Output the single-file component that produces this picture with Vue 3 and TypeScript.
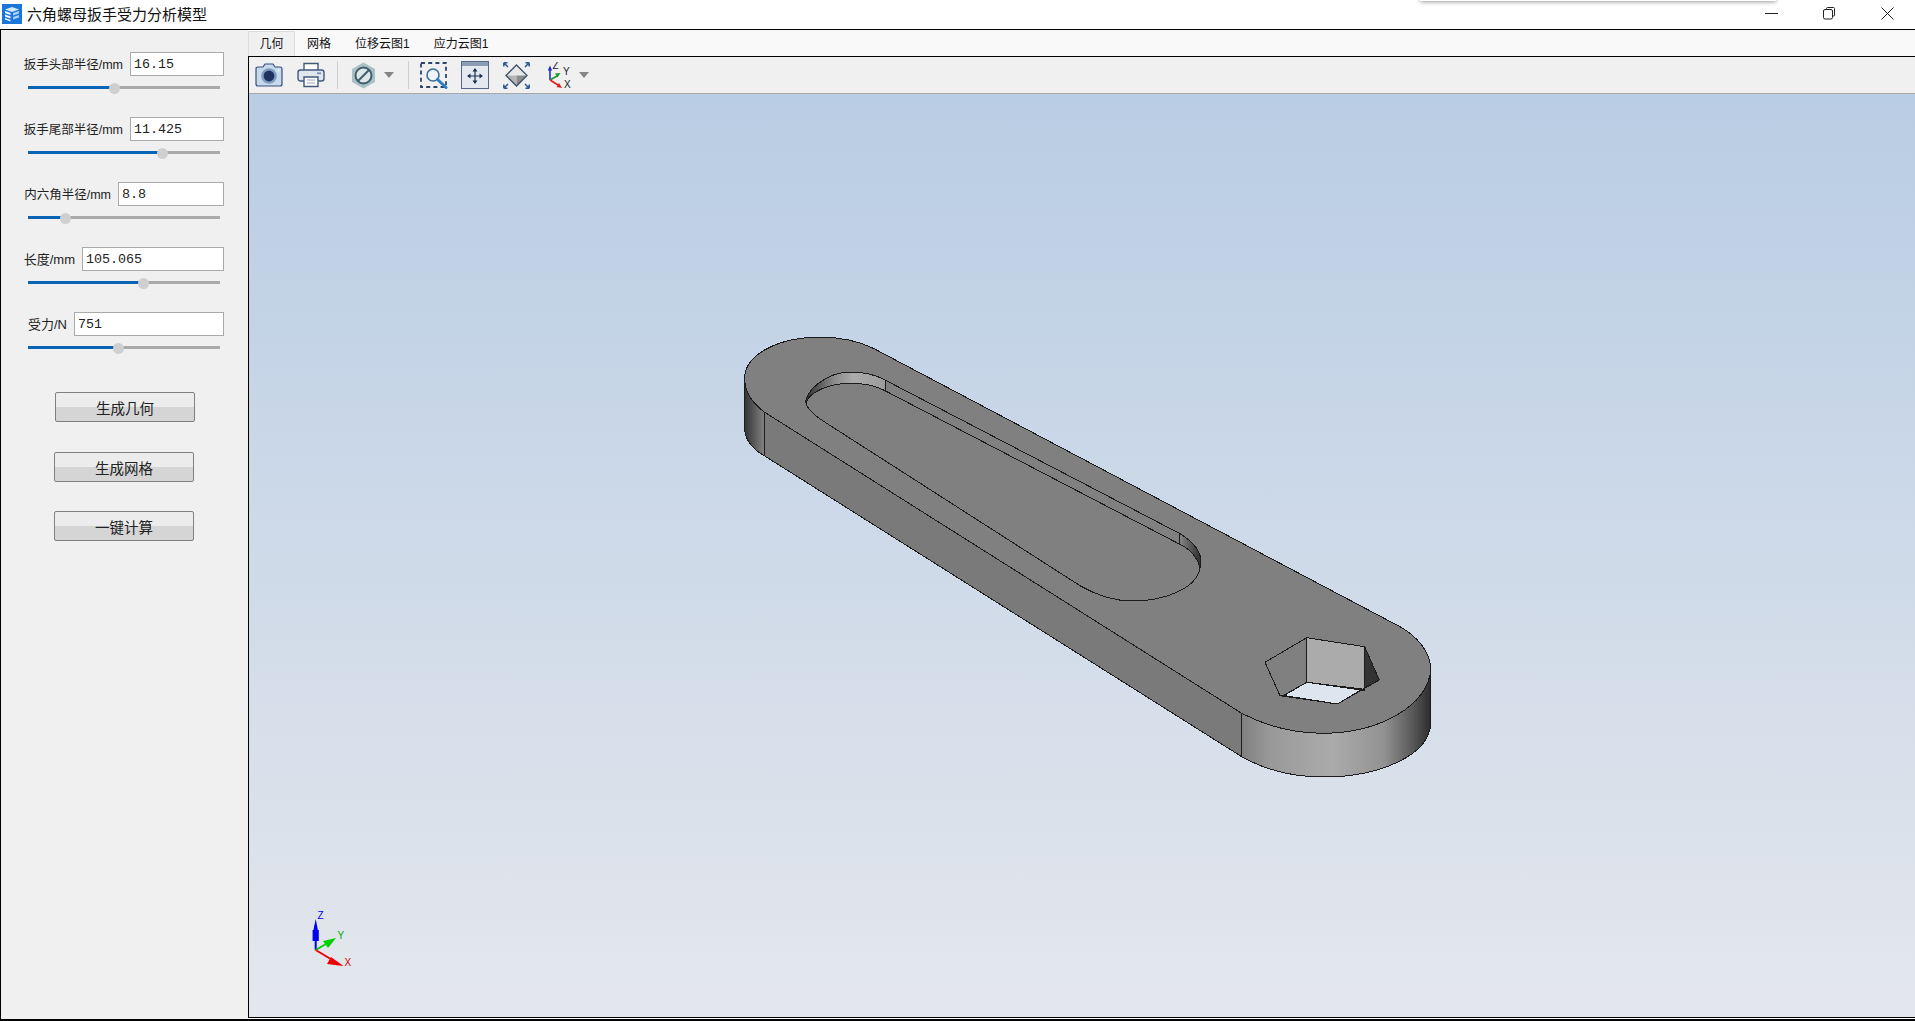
<template>
  <div class="window">
    <header class="titlebar">
      <svg class="app-icon" width="20" height="20" viewBox="0 0 20 20">
        <rect width="20" height="20" fill="#1a76dc" />
        <path d="M3 5.5 L10 3 L17 5.5 L10 8 Z" fill="#d5e8fb" />
        <path d="M3 7 L8.5 9 V11 L3 9 Z M3 10.5 L8.5 12.5 V14.5 L3 12.5 Z M3 14 L8.5 16 V17.5 L3 15.5 Z" fill="#fff" />
        <path d="M11 9 L17 7 V9.5 L11 11.5 Z M11 13 L17 11 V13.5 L11 15.5 Z" fill="#a9d0f5" />
      </svg>
      <span class="app-title">六角螺母扳手受力分析模型</span>
      <div class="win-buttons">
        <svg width="13" height="13" viewBox="0 0 13 13"><path d="M0 6.5 H13" stroke="#222" fill="none" /></svg>
        <svg width="13" height="13" viewBox="0 0 13 13">
          <path d="M3.5 2.5 V1.5 Q3.5 .5 4.5 .5 H10.5 Q11.5 .5 11.5 1.5 V8 Q11.5 9 10.5 9 H9.5" stroke="#222" fill="none" />
          <rect x=".5" y="2.5" width="9" height="9.5" rx="1.5" stroke="#222" fill="none" />
        </svg>
        <svg width="13" height="13" viewBox="0 0 13 13"><path d="M.5 .5 L12.5 12.5 M12.5 .5 L.5 12.5" stroke="#222" fill="none" /></svg>
      </div>
      <div class="other-window"></div>
    </header>

    <div class="body">
      <aside class="sidebar">
        <div v-for="f in fields" :key="f.label" class="field">
          <div class="field-row">
            <label :class="{ short: f.short }">{{ f.label }}</label>
            <input class="num" :value="f.value" :style="{ width: f.inputWidth + 'px' }" />
          </div>
          <div class="slider">
            <div class="slider-fill" :style="{ width: f.pos + 'px' }"></div>
            <div class="slider-thumb" :style="{ left: f.pos + 'px' }"></div>
          </div>
        </div>
        <button class="action first" type="button">生成几何</button>
        <button class="action second" type="button">生成网格</button>
        <button class="action third" type="button">一键计算</button>
      </aside>

      <main class="workspace">
        <nav class="tabs">
          <div v-for="(t, i) in tabs" :key="t" class="tab" :class="{ active: i === 0 }">{{ t }}</div>
        </nav>
        <div class="pane">
          <div class="toolbar">
            <!-- camera -->
            <svg class="tool camera" width="28" height="24" viewBox="0 0 28 24">
              <path d="M1 6 Q1 4 3 4 H8 L10 1 H18 L20 4 H25 Q27 4 27 6 V21 Q27 23 25 23 H3 Q1 23 1 21 Z" fill="#c9d9ec" stroke="#34507c" stroke-width="1.2" />
              <circle cx="14" cy="13" r="7.8" fill="#7f9cc0" />
              <circle cx="14" cy="13" r="5.4" fill="#1e3360" />
              <circle cx="23.5" cy="7.5" r="1" fill="#fff" />
            </svg>
            <!-- printer -->
            <svg class="tool printer" width="28" height="26" viewBox="0 0 28 26">
              <path d="M7 9 V1.5 H21 V9" fill="#fff" stroke="#44587c" stroke-width="1.4" />
              <rect x="1" y="8" width="26" height="11" rx="2.5" fill="#dfe6ee" stroke="#44587c" stroke-width="1.4" />
              <rect x="20" y="10.5" width="4" height="1.6" fill="#6e83a3" />
              <path d="M7 15 H21 V24.5 H7 Z" fill="#fff" stroke="#44587c" stroke-width="1.4" />
              <path d="M10 18 H18 M10 21 H18" stroke="#9aa8bd" stroke-width="1.2" />
            </svg>
            <span class="sep first-sep"></span>
            <!-- section view -->
            <svg class="tool hex" width="25" height="27" viewBox="0 0 25 27">
              <path d="M12.5 .5 L24 7 V20 L12.5 26.5 L1 20 V7 Z" fill="#a9c0c4" />
              <circle cx="12.5" cy="13.5" r="8" fill="#dfe6e8" stroke="#3e5e6e" stroke-width="2" />
              <path d="M7 19 L18 8" stroke="#3e5e6e" stroke-width="2" />
            </svg>
            <span class="caret hex-caret"></span>
            <span class="sep second-sep"></span>
            <!-- zoom window -->
            <svg class="tool zoomwin" width="29" height="27" viewBox="0 0 29 27">
              <rect x="1" y="1" width="25" height="24" fill="none" stroke="#2c4470" stroke-width="1.8" stroke-dasharray="4 3.2" />
              <circle cx="13" cy="13" r="6" fill="#eef4fa" stroke="#3c6ca0" stroke-width="1.6" />
              <path d="M17.5 17.5 L26 25.5" stroke="#2d7cc0" stroke-width="3" stroke-linecap="round" />
            </svg>
            <!-- pan -->
            <svg class="tool pan" width="28" height="28" viewBox="0 0 28 28">
              <rect x=".5" y=".5" width="27" height="27" fill="#e4e9f0" stroke="#55678a" />
              <rect x="1" y="1" width="26" height="4" fill="#8e9db6" />
              <path d="M14 8 V22 M7 15 H21" stroke="#1c3050" stroke-width="1.2" />
              <path d="M14 7 L11.5 10.5 H16.5 Z M14 23 L11.5 19.5 H16.5 Z M6 15 L9.5 12.5 V17.5 Z M22 15 L18.5 12.5 V17.5 Z" fill="#1c3050" />
            </svg>
            <!-- fit all -->
            <svg class="tool fit" width="27" height="27" viewBox="0 0 27 27">
              <path d="M13.5 3 L24 13.5 H3 Z" fill="#e8e8e8" />
              <path d="M3 13.5 H13.5 V24 Z" fill="#b4b4b4" />
              <path d="M24 13.5 H13.5 V24 Z" fill="#8c8c8c" />
              <path d="M13.5 3 L24 13.5 L13.5 24 L3 13.5 Z" fill="none" stroke="#3d5166" stroke-width="1.3" />
              <path d="M.8 .8 L5 5 M.8 .8 V4.5 M.8 .8 H4.5 M26.2 .8 L22 5 M26.2 .8 V4.5 M26.2 .8 H22.5 M.8 26.2 L5 22 M.8 26.2 V22.5 M.8 26.2 H4.5 M26.2 26.2 L22 22 M26.2 26.2 V22.5 M26.2 26.2 H22.5" stroke="#2d5a90" stroke-width="1.5" fill="none" />
            </svg>
            <!-- axes -->
            <svg class="tool axes" width="25" height="27" viewBox="0 0 25 27">
              <path d="M3 18 V7" stroke="#1f2fd0" stroke-width="1.6" />
              <path d="M3 3.5 L.8 8.5 H5.2 Z" fill="#1f2fd0" />
              <path d="M3 18 L10 14" stroke="#189a30" stroke-width="1.6" />
              <path d="M13.5 11 L8 11.5 L10.5 15.5 Z" fill="#189a30" />
              <path d="M3 18 L11 23" stroke="#e01c1c" stroke-width="1.6" />
              <path d="M15 26 L9.5 25 L12 21 Z" fill="#e01c1c" />
              <text x="5.5" y="7" class="axis-glyph">Z</text>
              <text x="16" y="13" class="axis-glyph">Y</text>
              <text x="17" y="26" class="axis-glyph">X</text>
            </svg>
            <span class="caret axes-caret"></span>
          </div>

          <div class="viewport">
            <svg class="scene" viewBox="249 94 1666 923" preserveAspectRatio="none">
              <defs>
                <linearGradient id="capL" gradientUnits="userSpaceOnUse" x1="744" y1="0" x2="766" y2="0">
                  <stop offset="0" stop-color="#303030" />
                  <stop offset="1" stop-color="#8a8a8a" />
                </linearGradient>
                <linearGradient id="capR" gradientUnits="userSpaceOnUse" x1="1242" y1="0" x2="1431" y2="0">
                  <stop offset="0" stop-color="#808080" />
                  <stop offset=".15" stop-color="#999" />
                  <stop offset=".48" stop-color="#ababab" />
                  <stop offset=".75" stop-color="#929292" />
                  <stop offset=".9" stop-color="#5a5a5a" />
                  <stop offset="1" stop-color="#2c2c2c" />
                </linearGradient>
                <linearGradient id="wallL" gradientUnits="userSpaceOnUse" x1="806" y1="0" x2="885" y2="0">
                  <stop offset="0" stop-color="#303030" />
                  <stop offset=".35" stop-color="#8a8a8a" />
                  <stop offset=".6" stop-color="#ababab" />
                  <stop offset="1" stop-color="#9c9c9c" />
                </linearGradient>
                <linearGradient id="wallR" gradientUnits="userSpaceOnUse" x1="1179" y1="0" x2="1201" y2="0">
                  <stop offset="0" stop-color="#8a8a8a" />
                  <stop offset="1" stop-color="#2c2c2c" />
                </linearGradient>
              </defs>

              <g shape-rendering="crispEdges" stroke="#1c1c1c" stroke-width="1" stroke-linejoin="round">
                <!-- side faces -->
                <path d="M744.7 378 V430 C746 442 754 450 764.7 456 V412.3 C752 403 744.7 391 744.7 378 Z" fill="url(#capL)" />
                <path d="M764.7 412.3 L1241.7 713.3 V756.7 L764.7 456 Z" fill="#7a7a7a" />
                <path d="M1241.7 713.3 C1262 724 1290 733 1323 733.3 C1380 733 1430 705 1430.7 668 V723 C1430 755 1380 777 1323 777 C1290 777 1262 768 1241.7 756.7 Z" fill="url(#capR)" />

                <!-- top face -->
                <path d="M764.7 412.3 C752 403 744.7 391 744.7 378 C744.7 355 778 337 820 337.3 C840 337 858 341 873.3 348.3 L1400 626.7 C1418 637 1430 652 1430.7 668 C1430 705 1380 733 1323 733.3 C1290 733 1262 724 1241.7 713.3 Z" fill="#808080" />

                <!-- pocket -->
                <path d="M806 403.3 C804 392 826 372 850 372.3 C864 372 876 375 885 380 L1179.3 533.3 C1192 541 1201 551 1201 561.7 L1200 568 C1197 588 1165 601 1133 601 C1115 601 1096 595 1080 585.7 L826.7 423.3 C815 416 808 410 806 403.3 Z" fill="#808080" />
                <path d="M806 403.3 C804 392 826 372 850 372.3 C864 372 876 375 885 380 V390.7 C875 385 862 383.3 850 383.3 C828 383.3 808 393 806 403.3 Z" fill="url(#wallL)" />
                <path d="M885 380 L1179.3 533.3 V544 L885 390.7" fill="none" />
                <path d="M1179.3 533.3 C1192 541 1201 551 1201 561.7 L1200 568 C1197 556 1190 549 1179.3 544 Z" fill="url(#wallR)" />

                <!-- hexagon -->
                <path d="M1265 662.3 L1306.7 637.7 V682.3 L1283 695.7 H1280 Z" fill="#808080" />
                <path d="M1306.7 637.7 L1364.7 646.7 V689.3 L1306.7 682.3 Z" fill="#ababab" />
                <path d="M1364.7 646.7 L1379.3 680 L1361 690 H1364.7 Z" fill="#333" />
                <path d="M1284 695.5 L1306.7 682.3 L1361 690 L1337.3 704 Z" fill="#dde5ef" />
                <path d="M1265 662.3 L1306.7 637.7 L1364.7 646.7 L1379.3 680 L1337.3 704 L1280 695.7 Z" fill="none" />
              </g>

              <!-- triad -->
              <path d="M315.7 950 V925" stroke="#0000f0" stroke-width="2" />
              <path d="M315.7 919 L313.5 930 H312.6 V941 H318.8 V930 H317.9 Z" fill="#0000f0" />
              <path d="M315.7 950 L331 941" stroke="#00d000" stroke-width="2" />
              <path d="M336 938 L323 941 L328 948 Z" fill="#00d000" />
              <path d="M315.7 950 L334 961" stroke="#f00000" stroke-width="2" />
              <path d="M343.5 966 L331 957 L327 964 Z" fill="#f00000" />
              <text x="317.5" y="919" class="triad" fill="#0000f0">Z</text>
              <text x="337.5" y="939" class="triad" fill="#00b000">Y</text>
              <text x="344.5" y="966" class="triad" fill="#d00000">X</text>
            </svg>
          </div>
        </div>
      </main>
    </div>
  </div>
</template>

<script setup lang="ts">
interface Field {
  label: string;
  value: string;
  inputWidth: number;
  pos: number; // thumb centre, px from the rail start
  short?: boolean;
}

const fields: Field[] = [
  { label: '扳手头部半径/mm', value: '16.15', inputWidth: 94, pos: 86 },
  { label: '扳手尾部半径/mm', value: '11.425', inputWidth: 94, pos: 134 },
  { label: '内六角半径/mm', value: '8.8', inputWidth: 106, pos: 37 },
  { label: '长度/mm', value: '105.065', inputWidth: 142, pos: 115, short: true },
  { label: '受力/N', value: '751', inputWidth: 150, pos: 90, short: true },
];

const tabs = ['几何', '网格', '位移云图1', '应力云图1'];
</script>

<style scoped>
.window {
  width: 1915px;
  height: 1021px;
  display: flex;
  flex-direction: column;
  background: #fff;
  font-family: "Liberation Sans", "Noto Sans CJK SC", sans-serif;
  overflow: hidden;
}

.titlebar {
  position: relative;
  height: 29px;
  flex: none;
  display: flex;
  align-items: flex-start;
  background: #fff;
  border-bottom: 1px solid #000;
  box-sizing: content-box;
}
.app-icon {
  margin: 4px 0 0 2px;
}
.app-title {
  margin-left: 5px;
  margin-top: 3px;
  font-family: "Noto Sans CJK SC", sans-serif;
  font-size: 15px;
  line-height: 22px;
  color: #111;
}
.win-buttons {
  margin-left: auto;
  margin-top: 7px;
  margin-right: 21px;
  display: flex;
  gap: 45px;
}
.other-window {
  position: absolute;
  left: 1420px;
  top: -4px;
  width: 356px;
  height: 5px;
  background: #fff;
  box-shadow: 0 1px 4px rgba(0, 0, 0, 0.4);
}

.body {
  flex: 1;
  display: flex;
  min-height: 0;
  border-left: 1px solid #000;
  border-bottom: 2px solid #000;
}

.sidebar {
  width: 247px;
  flex: none;
  box-sizing: border-box;
  padding: 22px 24px 0 0;
  background: #f0f0f0;
  display: flex;
  flex-direction: column;
  align-items: flex-end;
}
.field {
  height: 65px;
  width: 200px;
}
.field-row {
  display: flex;
  justify-content: flex-end;
  align-items: center;
  gap: 7px;
  height: 24px;
}
.field-row label {
  padding-bottom: 2px;
  font-size: 12.5px;
  color: #222;
  white-space: nowrap;
}
.field-row label.short {
  font-size: 13px;
}
.num {
  box-sizing: border-box;
  height: 24px;
  padding: 0 0 0 3px;
  border: 1px solid #aaa;
  background: #fff;
  border-radius: 0;
  outline: none;
  font-family: "Liberation Mono", monospace;
  font-size: 13.33px;
  color: #222;
}
.slider {
  position: relative;
  margin: 10px 4px 0 4px;
  height: 3px;
  width: 192px;
  background: #aaa;
}
.slider-fill {
  height: 3px;
  background: #0a64b4;
}
.slider-thumb {
  position: absolute;
  top: -3px;
  width: 11px;
  height: 11px;
  margin-left: -5.5px;
  border-radius: 50%;
  background: #cfcfcf;
}

.action {
  align-self: flex-start;
  box-sizing: border-box;
  width: 140px;
  height: 30px;
  padding: 0;
  border: 1px solid #808080;
  border-radius: 2px;
  background: linear-gradient(#ececec 0, #ececec 50%, #d5d5d5 50%, #d5d5d5 100%);
  font-family: "Noto Sans CJK SC", sans-serif;
  font-size: 14.5px;
  color: #222;
}
.action.first {
  margin: 15px 0 0 54px;
}
.action.second {
  margin: 30px 0 0 53px;
}
.action.third {
  margin: 29px 0 0 53px;
}

.workspace {
  flex: 1;
  min-width: 0;
  display: flex;
  flex-direction: column;
  background: #fff;
  padding-bottom: 1px;
}

.tabs {
  height: 26px;
  flex: none;
  display: flex;
  align-items: flex-end;
  background: #f9f9f9;
  border-bottom: 1px solid #000;
}
.tab {
  box-sizing: border-box;
  height: 25px;
  line-height: 23px;
  padding: 2px 12px 0;
  font-family: "Liberation Sans", "Noto Sans CJK SC", sans-serif;
  font-size: 12px;
  color: #111;
}
.tab.active {
  padding: 1px 0 0;
  width: 47px;
  background: #f0f0f0;
  border: 1px solid #ddd;
  border-bottom: none;
  text-align: center;
}

.pane {
  flex: 1;
  min-height: 0;
  display: flex;
  flex-direction: column;
  border-left: 1px solid #000;
}

.toolbar {
  height: 36px;
  flex: none;
  display: flex;
  align-items: center;
  background: #f0f0f0;
  border-bottom: 1px solid #a8a8a8;
}
.tool {
  flex: none;
}
.camera {
  margin-left: 6px;
}
.printer {
  margin-left: 14px;
}
.sep {
  width: 1px;
  height: 28px;
  background: #cfcfcf;
  flex: none;
}
.first-sep {
  margin: 0 13px 0 12px;
}
.second-sep {
  margin: 0 11px 0 14px;
}
.caret {
  flex: none;
  width: 0;
  height: 0;
  border-left: 5px solid transparent;
  border-right: 5px solid transparent;
  border-top: 6px solid #858585;
}
.hex-caret {
  margin-left: 8px;
}
.axes-caret {
  margin-left: 7px;
}
.pan {
  margin-left: 12px;
}
.fit {
  margin-left: 14px;
}
.axes {
  margin-left: 17px;
}
.axis-glyph {
  font-family: "Liberation Sans", sans-serif;
  font-size: 10px;
  fill: #222;
}

.viewport {
  flex: 1;
  min-height: 0;
  background: linear-gradient(#b9cde4, #e4e7ed);
  border-bottom: 1px solid #000;
}
.scene {
  display: block;
  width: 100%;
  height: 100%;
}
.triad {
  font-family: "Liberation Sans", sans-serif;
  font-size: 10px;
}
</style>

<style>
html,
body {
  margin: 0;
  background: #fff;
}
</style>
